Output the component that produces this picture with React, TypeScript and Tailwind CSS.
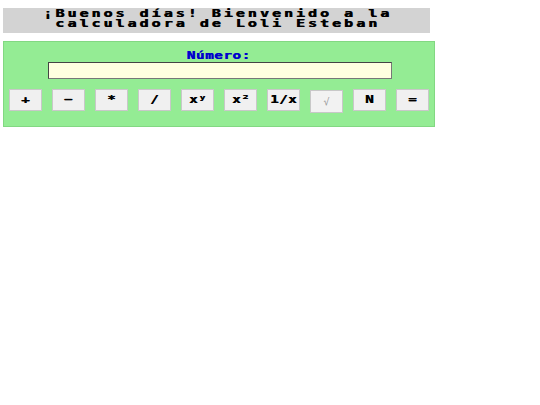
import React from "react";

const mono = { fontFamily: '"DejaVu Sans Mono", "Liberation Mono", monospace' };

export default function App() {
  const buttons = ["+", "−", "*", "/", "xʸ", "x²", "1/x", "√", "N", "="];
  return (
    <div className="w-[540px] h-[405px] bg-white pt-[8px]" style={mono}>
      <div className="ml-[3px] w-[427px] h-[25px] bg-[#d3d3d3] flex flex-col items-center pt-[1px] text-black font-bold text-[10px] leading-[10px] [text-shadow:0.5px_0_0_#000]">
        <div className="scale-x-[1.5] tracking-[2px] pl-[1px] whitespace-nowrap">¡Buenos días! Bienvenido a la</div>
        <div className="scale-x-[1.5] tracking-[2px] pl-[1px] whitespace-nowrap">calculadora de Loli Esteban</div>
      </div>
      <div className="ml-[3px] mt-[8px] w-[432px] border border-[#82d882] bg-[#94ec94] pt-[8px] pb-[13px]">
        <div className="flex justify-center">
          <div className="scale-x-[1.3] text-[#0000cd] font-bold text-[11px] leading-[12px] tracking-[0.4px] [text-shadow:0.4px_0_0_#0000cd]">
            Número:
          </div>
        </div>
        <div className="flex justify-center">
          <input
            type="text"
            className="ml-[2px] w-[344px] h-[17px] bg-[#ffffe0] border border-[#444] border-r-[#777] border-b-[#777] outline-none"
          />
        </div>
        <div className="flex gap-[10px] items-start mt-[10px] pl-[5px]">
          {buttons.map((b) =>
            b === "√" ? (
              <button
                key={b}
                className="w-[33px] h-[23px] mt-px bg-[#f2f2f2] border border-[#c8c8c8] text-[#999] text-[10px] flex items-center justify-center"
              >
                √
              </button>
            ) : (
              <button
                key={b}
                className="w-[33px] h-[22px] bg-[#f0f0f0] border border-[#c8c8c8] text-black font-bold text-[11px] flex items-center justify-center [text-shadow:0.4px_0_0_#000]"
              >
                <span className="inline-block scale-x-[1.3] tracking-[0.3px]">{b}</span>
              </button>
            )
          )}
        </div>
      </div>
    </div>
  );
}
